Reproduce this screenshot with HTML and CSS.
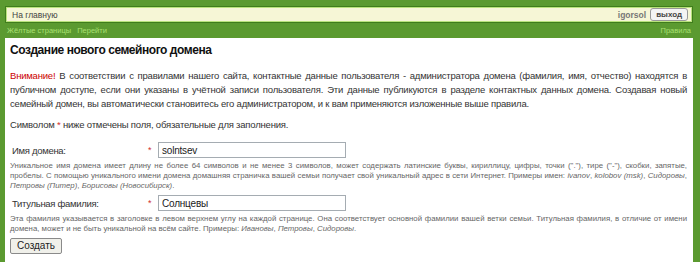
FILE: index.html
```html
<!DOCTYPE html>
<html lang="ru">
<head>
    <meta charset="UTF-8">
    <title>Создание нового семейного домена</title>
    <link rel="stylesheet" href="styles.css">
</head>
<body>

<!-- Верхняя панель -->
<div class="topbar">
    <a href="#" class="home">На главную</a>
    <div class="user">
        <span class="login">igorsol</span>
        <button class="logout">выход</button>
    </div>
</div>

<div class="links">
    <div>
        <a href="#">Жёлтые страницы</a>
        <a href="#">Перейти</a>
    </div>
    <a href="#">Правила</a>
</div>

<!-- Основной блок -->
<div class="content">
    <h1>Создание нового семейного домена</h1>

    <p class="warning">
        <span class="red">Внимание!</span> В соответствии с правилами нашего сайта, контактные данные пользователя - администратора домена (фамилия, имя, отчество) находятся в публичном доступе, если они указаны в учётной записи пользователя. Эти данные публикуются в разделе контактных данных домена. Создавая новый семейный домен, вы автоматически становитесь его администратором, и к вам применяются изложенные выше правила.
    </p>

    <p class="required">Символом <span class="star">*</span> ниже отмечены поля, обязательные для заполнения.</p>

    <form class="form">
        <div class="row">
            <label>Имя домена:</label>
            <span class="star">*</span>
            <input type="text" value="solntsev">
        </div>
        <p class="help">
            Уникальное имя домена имеет длину не более 64 символов и не менее 3 символов, может содержать латинские буквы, кириллицу, цифры, точки ("."), тире ("-"), скобки, запятые, пробелы. С помощью уникального имени домена домашняя страничка вашей семьи получает свой уникальный адрес в сети Интернет. Примеры имен: <i>ivanov</i>, <i>kolobov (msk)</i>, <i>Сидоровы</i>, <i>Петровы (Питер)</i>, <i>Борисовы (Новосибирск)</i>.
        </p>

        <div class="row">
            <label>Титульная фамилия:</label>
            <span class="star">*</span>
            <input type="text" value="Солнцевы">
        </div>
        <p class="help">
            Эта фамилия указывается в заголовке в левом верхнем углу на каждой странице. Она соответствует основной фамилии вашей ветки семьи. Титульная фамилия, в отличие от имени домена, может и не быть уникальной на всём сайте. Примеры: <i>Ивановы</i>, <i>Петровы</i>, <i>Сидоровы</i>.
        </p>

        <button type="button" class="submit">Создать</button>
    </form>
</div>

</body>
</html>
```

FILE: styles.css
```css
/* Общий стиль */
body {
    margin: 0;
    padding: 0 7px 0 5px;
    background-color: #5b9a30;
    font-family: 'Liberation Sans', Arial, sans-serif;
    font-size: 9.5px;
    color: #333;
}

/* Верхняя панель */
.topbar {
    margin-top: 6px;
    height: 15px;
    background-color: #f6f6d6;
    border: 1px solid #3f7d1c;
    box-shadow: inset 0 0 0 1px #b9e27c;
    display: flex;
    justify-content: space-between;
    align-items: center;
    padding: 0 4px 0 6px;
}

.topbar .home {
    color: #444;
    text-decoration: none;
    font-size: 8.5px;
}

.user {
    display: flex;
    align-items: center;
    gap: 4px;
}

.login {
    color: #777;
    font-weight: bold;
    font-size: 8.5px;
}

.logout {
    font-family: 'Liberation Sans', Arial, sans-serif;
    font-size: 8px;
    font-weight: bold;
    color: #444;
    background: #f4f4f4;
    border: 1px solid #999;
    border-radius: 3px;
    height: 13px;
    padding: 0 5px;
    line-height: 11px;
}

/* Ссылки */
.links {
    display: flex;
    justify-content: space-between;
    height: 15px;
    line-height: 16px;
    padding: 0 2px;
    font-size: 7.5px;
}

.links a {
    color: #a9e070;
    text-decoration: none;
    margin-right: 4px;
}

.links a:last-child {
    margin-right: 0;
}

/* Основной блок */
.content {
    background-color: #fff;
    padding: 4px 6px 10px 5px;
    min-height: 220px;
}

h1 {
    font-size: 12px;
    line-height: 16px;
    letter-spacing: -0.45px;
    font-weight: bold;
    color: #111;
    margin: 0 0 11px;
}

.warning {
    text-align: justify;
    line-height: 14px;
    letter-spacing: -0.2px;
    margin: 0 0 7px;
}

.red {
    color: #cc0000;
}

.star {
    color: #d03030;
}

.required {
    line-height: 14px;
    letter-spacing: -0.2px;
    margin: 0 0 9px;
}

/* Форма */
.row {
    display: flex;
    align-items: center;
    height: 18px;
    padding-left: 2px;
}

.row label {
    width: 136px;
    font-size: 9.5px;
    letter-spacing: -0.3px;
}

.row .star {
    width: 10px;
    font-size: 9px;
}

.row input {
    width: 180px;
    height: 12px;
    padding: 1px 3px;
    border: 1px solid #a5acb2;
    font-family: 'Liberation Sans', Arial, sans-serif;
    font-size: 10px;
    letter-spacing: -0.2px;
    color: #222;
}

.help {
    font-size: 7.8px;
    color: #666;
    line-height: 10px;
    margin: 2px 0 3px;
    text-align: justify;
}

.submit {
    font-family: 'Liberation Sans', Arial, sans-serif;
    font-size: 10px;
    color: #222;
    background: #f0f0ea;
    border: 1px solid #8a8a8a;
    border-radius: 2px;
    padding: 0 6px;
    height: 16px;
    line-height: 14px;
    margin-top: 1px;
}
```
